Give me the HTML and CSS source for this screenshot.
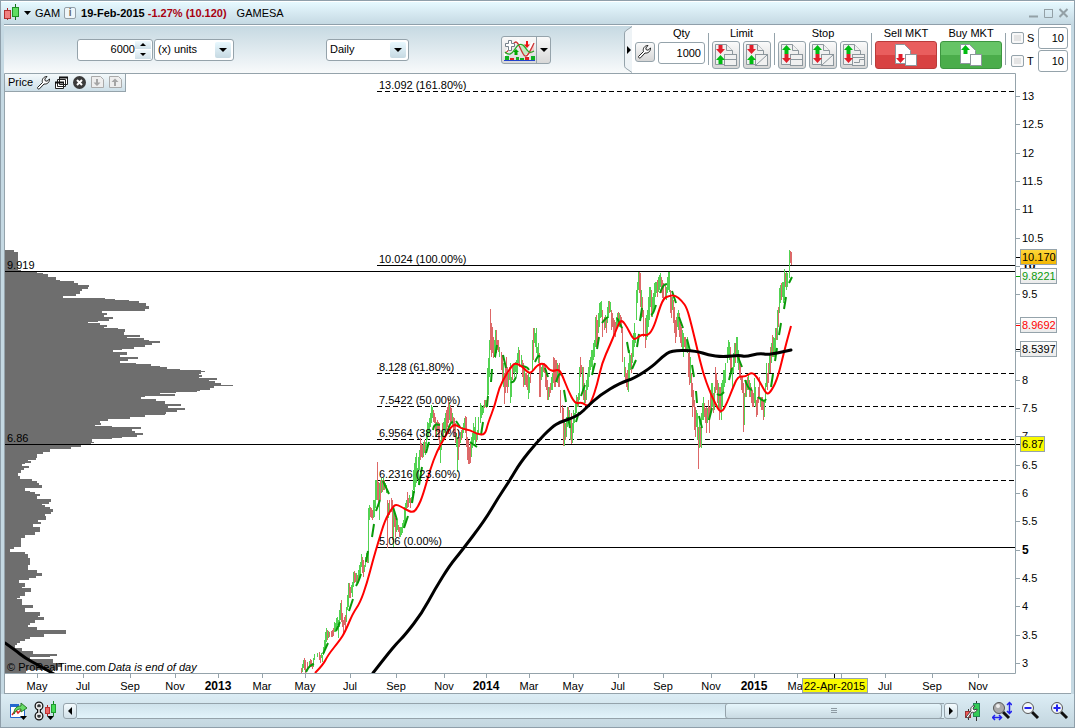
FILE: index.html
```html
<!DOCTYPE html>
<html lang="en">
<head>
<meta charset="utf-8">
<title>GAM - GAMESA</title>
<link rel="stylesheet" href="styles.css">
</head>
<body>
<svg class="defs" aria-hidden="true">
  <defs>
    <path id="up" d="M4.500 0L9 5H6.500V9H2.500V5H0Z"/>
    <path id="down" d="M4.500 9L9 4H6.500V0H2.500V4H0Z"/>
    <path id="sheet" d="M1.500.5H12.500L18.500 6.500V20.500H1.500Z"/>
    <path id="wrench" d="M1.500 12.500L6.500 7.500C5.500 4.500 7.500 1.500 11 1.500L8.800 4L9.200 5.800L11 6.200L13.500 4C13.700 7.500 11 9.500 8 9L3.500 13.800C2.500 14.500 1 13.500 1.500 12.500Z"/>
  </defs>
</svg>
<div class="window">
  <header class="titlebar">
    <svg class="logo" width="16" height="18" viewBox="0 0 16 18"><path d="M3.500 4V16" stroke="#b02020"/><rect x=".5" y="6.500" width="6" height="8" fill="#f08080" stroke="#b03030"/><path d="M11.500 0V16" stroke="#107018"/><rect x="8.500" y="3.500" width="6" height="9" fill="#5fdd62" stroke="#209028"/></svg>
    <svg class="caret" width="7" height="4" viewBox="0 0 7 4"><path d="M0 0H7L3.500 4Z"/></svg>
    <span>GAM</span>
    <button class="info" aria-label="Information">i</button>
    <strong class="quote">19-Feb-2015 <span class="loss">-1.27% (10.120)</span></strong>
    <span class="name">GAMESA</span>
    <div class="wincontrols">
      <button aria-label="Minimise"><svg width="9" height="10" viewBox="0 0 9 10"><path d="M0 8.500H9" stroke="#93a0a6" stroke-width="2"/></svg></button>
      <button aria-label="Maximise"><svg width="9" height="10" viewBox="0 0 9 10"><path d="M.5 1V9.500H8.500V1M0 1.500H9" fill="none" stroke="#93a0a6"/></svg></button>
      <button aria-label="Close"><svg width="9" height="10" viewBox="0 0 9 10"><path d="M.5 1L8.500 9M8.500 1L.5 9" stroke="#93a0a6" stroke-width="2"/></svg></button>
    </div>
  </header>

  <main class="content">
    <div class="toolbar">
      <div class="settings">
        <div class="pair">
          <div class="field units">
            <input type="text" value="6000" aria-label="Number of units">
            <div class="spin">
              <button aria-label="Increase"><svg width="6" height="3" viewBox="0 0 6 3"><path d="M0 3H6L3 0Z"/></svg></button>
              <button aria-label="Decrease"><svg width="6" height="3" viewBox="0 0 6 3"><path d="M0 0H6L3 3Z"/></svg></button>
            </div>
          </div>
          <div class="field kind">
            <select aria-label="Unit type"><option>(x) units</option></select>
            <span class="chip"><svg width="8" height="4" viewBox="0 0 8 4"><path d="M0 0H8L4 4Z"/></svg></span>
          </div>
        </div>
        <div class="field period">
          <select aria-label="Period"><option>Daily</option></select>
          <span class="chip"><svg width="8" height="4" viewBox="0 0 8 4"><path d="M0 0H8L4 4Z"/></svg></span>
        </div>
        <button class="indicator" aria-label="Add indicator">
          <svg width="32" height="22" viewBox="0 0 32 22">
            <path d="M0 17L8 5L14 2L20 13L24 16L29 3" fill="none" stroke="#fff" stroke-width="3"/>
            <path d="M15 7L20 5L24 14L20 17Z" fill="#bfeabf"/><path d="M23 14L30 5V12L27 15H24Z" fill="#f6caca"/>
            <path d="M1 14C5 13 9 3 12 3S18 16 21 17S26 12 30 4" fill="none" stroke="#c33" stroke-width="1.300"/>
            <path d="M1 13C5 17 8 15 11 10S17 4 20 7S24 16 30 12" fill="none" stroke="#2a2" stroke-width="1.300"/>
            <path d="M4.500 1.500H7.500V4.500H10.500V7.500H7.500V11.500H4.500V7.500H1.500V4.500H4.500Z" fill="#fff" stroke="#75818b"/>
            <path d="M12 10L15 13H13.500V16H10.500V13H9Z" fill="#0a0"/><path d="M23 9L26 5.500H24V2H22V5.500H20Z" fill="#e11"/>
            <path d="M1 17H5V21H1ZM12 18H15V21H12ZM16 19H20V21H16ZM27 17H31V21H27Z" fill="#10b020"/><path d="M6 19H10V21H6ZM21 18H25V21H21Z" fill="#d22"/><path d="M0 21.500H31" stroke="#24c"/>
          </svg>
          <span class="drop"><svg width="8" height="4" viewBox="0 0 8 4"><path d="M0 0H8L4 4Z"/></svg></span>
        </button>
      </div>

      <div class="orders">
        <svg class="handle" width="8" height="47" viewBox="0 0 8 47"><path class="slope" d="M8 .5L1.500 5Q.5 5.700.5 8V39Q.5 41.300 1.500 42L8 46.500Z"/><path class="edge" d="M8 .5L1.500 5Q.5 5.700.5 8V39Q.5 41.300 1.500 42L8 46.500"/><path d="M3 20L7 24L3 28Z"/></svg>
        <button class="tool small" aria-label="Order settings"><svg width="16" height="16" viewBox="0 0 16 16"><use href="#wrench" fill="#fff" stroke="#222"/></svg></button>
        <div class="group qty">
          <label for="qty">Qty</label>
          <input id="qty" type="text" value="1000">
        </div>
        <i class="sep"></i>
        <div class="group"><span>Limit</span>
          <div class="row">
            <button class="tool" aria-label="Limit"><svg width="24" height="22" viewBox="0 0 24 22"><use class="page" href="#sheet"/><path class="page" d="M12.500.5V6.500H18.500"/><rect class="page" x="10.500" y="10.500" width="12" height="11"/><path class="page" d="M10 15.500H23"/><use href="#down" x="2" y="1" fill="#e11d2a"/><use href="#up" x="2" y="11" fill="#0b1"/></svg></button>
            <button class="tool" aria-label="Sloped limit"><svg width="24" height="22" viewBox="0 0 24 22"><use class="page" href="#sheet"/><path class="page" d="M12.500.5V6.500H18.500"/><rect class="page" x="10.500" y="10.500" width="12" height="11"/><path class="page" d="M11 21L22 11"/><use href="#down" x="2" y="1" fill="#e11d2a"/><use href="#up" x="2" y="11" fill="#0b1"/></svg></button>
          </div>
        </div>
        <i class="sep"></i>
        <div class="group"><span>Stop</span>
          <div class="row">
            <button class="tool" aria-label="Stop"><svg width="24" height="22" viewBox="0 0 24 22"><use class="page" href="#sheet"/><path class="page" d="M12.500.5V6.500H18.500"/><rect class="page" x="10.500" y="10.500" width="12" height="11"/><path class="page" d="M10 15.500H23"/><use href="#up" x="2" y="1" fill="#0b1"/><use href="#down" x="2" y="10" fill="#e11d2a"/></svg></button>
            <button class="tool" aria-label="Sloped stop"><svg width="24" height="22" viewBox="0 0 24 22"><use class="page" href="#sheet"/><path class="page" d="M12.500.5V6.500H18.500"/><rect class="page" x="10.500" y="10.500" width="12" height="11"/><path class="page" d="M11 21L22 11"/><use href="#up" x="2" y="1" fill="#0b1"/><use href="#down" x="2" y="10" fill="#e11d2a"/></svg></button>
            <button class="tool" aria-label="Trailing stop"><svg width="24" height="22" viewBox="0 0 24 22"><use class="page" href="#sheet"/><path class="page" d="M12.500.5V6.500H18.500"/><rect class="page" x="10.500" y="10.500" width="12" height="11"/><path class="page" d="M10 13.500H23M12 18.500H17.500V15.500H22"/><use href="#up" x="2" y="1" fill="#0b1"/><use href="#down" x="2" y="10" fill="#e11d2a"/></svg></button>
          </div>
        </div>
        <i class="sep"></i>
        <div class="group"><label for="sell">Sell MKT</label>
          <button id="sell" class="market sell" aria-label="Sell MKT"><svg width="22" height="22" viewBox="0 0 22 22"><path class="page" d="M.5.500H9.500L15.500 6.500V19.500H.5Z"/><rect class="page" x="10.500" y="10.500" width="11" height="11"/><use href="#down" x="1" y="10" fill="#e11d2a"/></svg></button>
        </div>
        <div class="group"><label for="buy">Buy MKT</label>
          <button id="buy" class="market buy" aria-label="Buy MKT"><svg width="22" height="22" viewBox="0 0 22 22"><path class="page" d="M.5.500H9.500L15.500 6.500V19.500H.5Z"/><rect class="page" x="10.500" y="10.500" width="11" height="11"/><use href="#up" x="1" y="1" fill="#0b1"/></svg></button>
        </div>
        <i class="sep"></i>
        <div class="protect">
          <div class="line"><input type="checkbox" id="s"><label for="s">S</label><input type="text" value="10" aria-label="S distance"></div>
          <div class="line"><input type="checkbox" id="t"><label for="t">T</label><input type="text" value="10" aria-label="T distance"></div>
        </div>
      </div>
    </div>

    <section class="chart">
      <svg class="plot" viewBox="4 73 1067 621" preserveAspectRatio="xMinYMin meet" role="img" aria-label="GAMESA daily price">
        <defs>
          <clipPath id="area"><rect x="5" y="74" width="1010" height="599"/></clipPath>
          <linearGradient id="gold" x2="0" y2="1"><stop offset="0" stop-color="#ffd83c"/><stop offset="1" stop-color="#f3b600"/></linearGradient>
          <linearGradient id="silver" x2="0" y2="1"><stop offset="0" stop-color="#fff"/><stop offset="1" stop-color="#eaeaea"/></linearGradient>
        </defs>
        <path class="frame" d="M4.500 694V73.500H1015.500V673.500H4M4 693.500H1071"/>
        <path id="profile" fill="#6e6e6e"/>
        <g class="level">
          <path class="dashed" d="M377 91.500H1015M377 373.500H1015M377 406.500H1015M377 439.500H1015M377 480.500H1015"/>
          <path d="M377 265.500H1015M377 547.500H1015M5 271.500H1015M5 444.500H1015"/>
        </g>
        <g clip-path="url(#area)">
          <path id="rises" class="bars" stroke="#52d352"/>
          <path id="falls" class="bars" stroke="#dd6868"/>
          <path id="fast" class="fast"/>
          <path id="medium" class="medium"/>
          <path id="slow" class="slow"/>
        </g>
        <g class="label">
          <text x="379" y="89">13.092 (161.80%)</text><text x="379" y="263">10.024 (100.00%)</text>
          <text x="379" y="371">8.128 (61.80%)</text><text x="379" y="404">7.5422 (50.00%)</text>
          <text x="379" y="437">6.9564 (38.20%)</text><text x="379" y="478">6.2316 (23.60%)</text>
          <text x="379" y="545">5.06 (0.00%)</text><text x="7" y="269">9.919</text><text x="7" y="442">6.86</text>
          <text x="7" y="671">© ProRealTime.com</text><text x="108" y="671" font-style="italic">Data is end of day</text>
        </g>
        <path id="ticks" class="frame"/>
        <g id="scale" class="label"></g>
        <g class="label">
          <path class="level" d="M1016 257.500H1020M1016 349.500H1020M1016 444.500H1020M834.500 674V678"/>
          <path d="M1016 276.500H1020" stroke="#0a0"/><path d="M1016 325.500H1020" stroke="red"/>
          <rect class="tag" x="1020.500" y="249.500" width="36" height="15" fill="url(#gold)"/><text x="1022" y="261">10.170</text>
          <rect class="tag" x="1020.500" y="268.500" width="36" height="15" fill="url(#silver)"/><text x="1022" y="280" fill="#0c9a0c">9.8221</text>
          <rect class="tag" x="1020.500" y="317.500" width="36" height="15" fill="url(#silver)"/><text x="1022" y="329" fill="red">8.9692</text>
          <rect class="tag" x="1020.500" y="341.500" width="36" height="15" fill="url(#silver)"/><text x="1022" y="353">8.5397</text>
          <rect class="tag" x="1020.500" y="436.500" width="24" height="15" fill="#fafa00"/><text x="1022" y="448">6.87</text>
          <rect class="tag" x="802.500" y="678.500" width="65" height="14" fill="#fafa00"/><text x="804" y="690">22-Apr-2015</text>
        </g>
      </svg>
      <div class="pricebar">
        <span>Price</span>
        <button aria-label="Price settings"><svg width="15" height="15" viewBox="0 0 15 15"><use href="#wrench" fill="#fff" stroke="#222"/></svg></button>
        <button aria-label="Detach"><svg width="15" height="15" viewBox="0 0 15 15"><path d="M5.500 2.500H13.500V9.500H5.500ZM3.500 4.500H11.500V11.500H3.500ZM1.500 7.500H9.500V13.500H1.500Z" fill="#fff" stroke="#222"/><path d="M5 2.500H14M1 7.500H10" stroke="#111" stroke-width="2"/></svg></button>
        <button aria-label="Remove"><svg width="15" height="15" viewBox="0 0 15 15"><circle cx="7.500" cy="7.500" r="6.500" fill="#3b3b3b"/><path d="M5 5L10 10M10 5L5 10" stroke="#fff" stroke-width="2"/></svg></button>
        <button aria-label="Move down" disabled><svg width="15" height="15" viewBox="0 0 15 15"><path d="M1.500 1.500H10.500L13.500 4.500V12.500H1.500Z" fill="#eee" stroke="#aaa"/><path d="M7 11L3.500 7.500H6V4H8V7.500H10.500Z" fill="#a5a5a5"/></svg></button>
        <button aria-label="Move up" disabled><svg width="15" height="15" viewBox="0 0 15 15"><path d="M1.500 1.500H10.500L13.500 4.500V12.500H1.500Z" fill="#eee" stroke="#aaa"/><path d="M7 3.500L3.500 7H6V11H8V7H10.500Z" fill="#a5a5a5"/></svg></button>
      </div>
    </section>
  </main>

  <footer class="bottombar">
    <button aria-label="Export chart"><svg width="20" height="20" viewBox="0 0 20 20"><path d="M1.500 4V16.500H15.500V8" fill="#fff" stroke="#2468d0"/><path d="M1 4.500H10" stroke="#2468d0" stroke-width="3"/><path d="M3 14L7 9L9 12L13 8" fill="none" stroke="#d22" stroke-width="1.500"/><path d="M5 13C5 7 8 5 12 5V2L18 7L12 11V8C9 8 7 9 5 13Z" fill="#66dc66" stroke="#2a7a2a"/><path d="M11 15H18L14.500 19Z"/></svg></button>
    <button aria-label="Link charts"><svg width="24" height="20" viewBox="0 0 24 20"><g fill="none" stroke="#111" stroke-width="4"><circle cx="5" cy="5" r="2.500"/><circle cx="5" cy="15" r="2.500"/><path d="M5 6V14"/></g><g fill="none" stroke="#eee" stroke-width="1.500"><circle cx="5" cy="5" r="2.500"/><circle cx="5" cy="15" r="2.500"/><path d="M5 6V14"/></g><path d="M13.500 4V15" stroke="#a22"/><rect x="11.500" y="6.500" width="4" height="6" fill="#e66" stroke="#b33"/><path d="M19.500 0V15" stroke="#182"/><rect x="17.500" y="3.500" width="4" height="8" fill="#4d5" stroke="#293"/><path d="M13 15H20L16.500 19Z"/></svg></button>
    <button class="arrow" aria-label="Scroll left"><svg width="4" height="8" viewBox="0 0 4 8"><path d="M4 0V8L0 4Z"/></svg></button>
    <div class="track"><div class="thumb"><svg width="6" height="5" viewBox="0 0 6 5"><path d="M0 .5H6M0 2.500H6M0 4.500H6" stroke="#8e9ba3"/></svg></div></div>
    <button class="arrow" aria-label="Scroll right"><svg width="4" height="8" viewBox="0 0 4 8"><path d="M0 0V8L4 4Z"/></svg></button>
    <div class="views">
      <button aria-label="Chart style"><svg width="18" height="20" viewBox="0 0 18 20"><path d="M11.500 0V20M3.500 8V19" stroke="#333"/><rect x="8.500" y="2.500" width="6" height="13" fill="#3c5" stroke="#285"/><rect x=".5" y="10.500" width="5" height="6" fill="#e55" stroke="#933"/><path d="M1 16L6 10C5 7 7 4 10 5L8 7L9 9L12 8C12 11 9 12 7 11L3 17Z" fill="#fff" stroke="#444"/></svg></button>
      <button aria-label="Automatic zoom"><svg width="20" height="20" viewBox="0 0 20 20"><path d="M11 11L17 17" stroke="#111" stroke-width="3"/><circle cx="7" cy="7" r="5.500" fill="#aaa" stroke="#555"/><circle cx="6" cy="5" r="2" fill="#eee"/><path d="M17.500 2V11M15 4L17.500 1.500L20 4M15 10L17.500 12.500L20 10M1 16.500H9M3 14L.5 16.500L3 19M7 14L9.500 16.500L7 19" fill="none" stroke="#22e" stroke-width="1.500"/></svg></button>
      <button aria-label="Zoom out"><svg width="20" height="20" viewBox="0 0 20 20"><path d="M11 11L17 17" stroke="#111" stroke-width="3"/><circle cx="7" cy="7" r="5.500" fill="#f3f8fb" stroke="#555"/><path d="M3.500 7H10.500" stroke="#22e" stroke-width="2"/></svg></button>
      <button aria-label="Zoom in"><svg width="20" height="20" viewBox="0 0 20 20"><path d="M11 11L17 17" stroke="#111" stroke-width="3"/><circle cx="7" cy="7" r="5.500" fill="#f3f8fb" stroke="#555"/><path d="M3.500 7H10.500M7 3.500V10.500" stroke="#22e" stroke-width="2"/></svg></button>
    </div>
  </footer>
</div>
<script src="chart.js"></script>
</body>
</html>
```
FILE: styles.css
```css
* { box-sizing: border-box; }
body { margin: 0; font: 11px/13px "Liberation Sans", Arial, sans-serif; color: #000; }
button, input, select { font: inherit; color: inherit; margin: 0; padding: 0; }
button { border: 0; background: none; display: flex; align-items: center; justify-content: center; }
svg { display: block; flex: none; }
.defs { position: absolute; width: 0; height: 0; }

.window { min-height: 100vh; display: flex; flex-direction: column; border: 1px solid #8f9faa; background: #c5d9e3; }
.titlebar { height: 23px; flex: none; display: flex; align-items: center; padding: 0 6px 0 3px; border-top: 1px solid #fff; background: linear-gradient(#e6f9ff, #c5d9e3); }
.caret { margin: 0 4px; }
.info { width: 12px; height: 12px; margin: 0 5px 0 4px; border: 1px solid #93a0a8; border-radius: 2px; background: #eef6fa; color: #666; font-weight: bold; font-size: 10px; line-height: 10px; }
.quote { white-space: pre; }
.loss { color: #a80010; }
.name { margin-left: 10px; }
.wincontrols { margin-left: auto; display: flex; gap: 6px; }

.content { flex: 1; display: flex; flex-direction: column; margin: 0 3px; border-top: 1px solid #8f9faa; background: #fff; }
.toolbar { height: 48px; flex: none; display: flex; border-top: 1px solid #fff; background: linear-gradient(#c6d9e2, #f8fafb); }
.settings { flex: 1; display: flex; align-items: center; gap: 92px; padding-left: 73px; }
.pair { display: flex; gap: 1px; }
.field { position: relative; height: 22px; display: flex; border: 1px solid #95a3ab; border-radius: 3px; background: #fff; }
.units { width: 76px; padding: 1px; }
.units input { flex: 1; min-width: 0; border: 0; background: none; text-align: right; }
.kind { width: 80px; }
.period { width: 83px; }
.field select { width: 100%; border: 0; padding-left: 3px; background: none; appearance: none; }
.spin { width: 16px; display: flex; flex-direction: column; gap: 1px; }
.spin button { flex: 1; background: linear-gradient(#f0f9fd, #cfdfe7); }
.chip { position: absolute; right: 2px; top: 2px; width: 16px; height: 16px; display: grid; place-items: center; border-radius: 2px; background: linear-gradient(#e8f8fe, #c6d9e2); pointer-events: none; }
.indicator { width: 50px; height: 28px; justify-content: space-between; padding-left: 2px; border: 1px solid #95a3ab; border-radius: 3px; background: linear-gradient(#fafafa, #d8d8d8); }
.drop { width: 14px; height: 26px; display: grid; place-items: center; border-left: 1px solid #95a3ab; }

.orders { display: flex; gap: 3px; background: linear-gradient(90deg, transparent 8px, #fff 8px); padding-right: 3px; }
.slope { fill: #eef3f6; }
.edge { fill: none; stroke: #95a3ab; }
.tool { width: 28px; height: 28px; border: 1px solid #95a3ab; border-radius: 3px; background: linear-gradient(#fafafa, #d6d6d6); }
.small { width: 20px; height: 20px; margin-top: 16px; }
.page { fill: #f0f0f0; stroke: #8d979d; }
.market .page { fill: #fff; }
.group { display: flex; flex-direction: column; text-align: center; }
.group > span, .group > label { height: 15px; padding-top: 1px; }
.row { display: flex; gap: 3px; }
.sep { width: 1px; height: 32px; margin-top: 7px; background: #95a3ab; }
.qty { width: 47px; }
.qty input, .line input[type=text] { height: 22px; padding-right: 3px; border: 1px solid #95a3ab; border-radius: 3px; background: #fff; text-align: right; }
.qty input { width: 100%; margin-top: 1px; }
.market { width: 62px; height: 28px; border-radius: 3px; }
.sell { border: 1px solid #b93b3b; background: linear-gradient(#e95e5e 50%, #d84242 50%); }
.buy { border: 1px solid #3d9540; background: linear-gradient(#66c466 50%, #4bad4b 50%); }
.protect { display: flex; flex-direction: column; gap: 1px; padding: 1px 0 0 2px; }
.line { display: flex; align-items: center; gap: 3px; }
.line label { width: 8px; }
.line input[type=text] { width: 30px; }
.line input[type=checkbox] { width: 13px; height: 12px; appearance: none; border: 1px solid #95a3ab; border-radius: 2px; background: #e4e4e4; box-shadow: inset 0 0 0 2px #f8f8f8; }

.chart { position: relative; flex: 1; }
.plot { width: 100%; height: auto; }
.frame { fill: none; stroke: #95a3ab; }
.level { fill: none; stroke: #000; }
.dashed { stroke-dasharray: 5 3; }
.bars { fill: none; shape-rendering: crispEdges; }
.fast { fill: none; stroke: #0a9a0a; stroke-width: 2; }
.medium { fill: none; stroke: #f00; stroke-width: 2; stroke-linejoin: round; }
.slow { fill: none; stroke: #000; stroke-width: 3; stroke-linejoin: round; stroke-linecap: round; }
.label { font-size: 11px; }
.tag { stroke: #95a3ab; }
.major { font-size: 12px; font-weight: bold; }
.middle { text-anchor: middle; }
.pricebar { position: absolute; left: 1px; top: 1px; height: 18px; display: flex; align-items: center; gap: 3px; padding: 0 2px 0 3px; border: solid #95a3ab; border-width: 0 1px 1px 0; background: linear-gradient(#f4f9fb, #cddfe8); }

.bottombar { height: 33px; flex: none; display: flex; align-items: center; padding: 0 4px 0 8px; background: linear-gradient(#dcedf5, #c3d6df); }
.bottombar > button + button { margin-left: 5px; }
.bottombar .arrow { width: 14px; height: 16px; border: 1px solid #95a3ab; border-radius: 3px; background: linear-gradient(#f4fbfe, #d0e0e8); }
.track { flex: 1; height: 16px; display: flex; justify-content: flex-end; border: solid #95a3ab; border-width: 1px 0; background: linear-gradient(#cfe2eb, #e2f4fb); }
.thumb { width: 25%; height: 16px; margin: -1px 2px 0 0; display: grid; place-items: center; border: 1px solid #95a3ab; border-radius: 3px; background: linear-gradient(#e6f6fc, #c9dae2); }
.views { display: flex; gap: 9px; margin-left: 7px; }
```
FILE: chart.js
```js
// Volume profile: "right edge,bottom" of each step, from the top down.
const profile = `14,252 18,270 21,271 37,273 43,274 48,277 56,280 60,281 74,283 78,285 89,287 88,289 82,291 80,294 76,296 63,298 105,299 115,300 129,301 139,303 146,306 149,309 145,311 102,313 107,315 104,317 113,319 109,321 98,322 88,323 100,325 107,327 104,328 118,329 125,332 124,335 140,337 127,338 144,340 149,341 160,343 152,345 145,347 134,349 122,350 113,352 127,355 120,357 138,359 128,361 120,363 136,364 151,366 160,367 167,369 180,370 201,371 205,372 201,374 199,375 202,377 199,378 217,380 209,381 215,383 221,385 233,386 214,388 210,390 200,391 197,392 176,393 160,394 175,396 145,397 141,399 156,401 165,404 181,406 168,408 185,410 177,412 166,414 165,415 145,417 130,419 108,421 100,423 101,425 95,426 112,427 141,429 132,431 135,433 143,435 137,437 122,438 112,439 92,442 94,443 91,445 81,447 71,449 50,452 43,454 37,458 36,460 28,461 31,463 25,464 22,466 29,468 24,470 21,473 18,476 20,479 32,481 37,483 39,485 42,488 25,491 30,492 35,494 40,496 37,499 51,502 49,504 42,505 45,507 50,509 53,512 51,514 45,516 46,520 38,522 41,524 33,527 40,532 35,535 25,538 21,547 14,549 10,552 25,554 28,558 30,565 28,570 37,573 42,576 36,578 29,580 19,583 25,587 22,588 31,592 25,596 20,598 17,599 22,605 33,608 25,612 40,616 38,617 44,620 35,623 30,625 28,627 37,630 66,634 44,637 30,639 25,641 20,643 17,645 15,648 22,651 33,654 57,656 50,657 30,659 53,663 62,667 58,670 26,673`;

// Daily ranges in thirds of a pixel, "x,high,low,direction", from each section's origin.
const sections = [
  [290, 440, `33,683,698,r 36,672,695,g 39,660,685,g 42,655,690,r 45,660,698,r 51,665,690,r 57,662,685,g 60,657,680,r 63,660,682,r 66,670,688,r 69,655,680,g 72,642,660,g 81,640,650,g 87,635,660,r 90,645,670,r 93,640,655,g 96,645,665,g 99,620,645,g 102,600,640,g 105,575,620,g 108,565,605,g 111,570,600,r 114,572,595,g 117,575,590,r 123,572,590,r 126,570,590,r 129,565,588,r 132,545,575,g 135,550,575,g 138,535,570,g 141,530,555,g 144,540,595,g 147,510,560,g 150,490,540,g 153,480,545,r 156,520,560,r 159,540,585,r 162,530,555,r 165,525,575,r 168,500,545,g 171,465,510,g 174,430,500,g 177,430,475,r 180,440,475,r 183,435,460,g 186,425,470,g 189,395,440,g 192,392,430,r 195,400,425,r 198,400,430,g 201,405,425,r 204,390,420,g 207,375,415,g 210,365,405,g 213,343,380,g 216,350,400,r 219,360,410,r 222,375,395,g 225,350,380,g 228,340,365,g 231,340,370,r 234,205,368,g 237,195,240,g 240,200,230,r 243,205,235,r 246,210,240,r 249,180,235,g 252,180,230,g 255,120,205,g 258,120,180,g 261,66,180,r 264,125,200,r 267,130,240,g 270,120,180,r 273,115,160,g 276,120,155,r 279,115,150,g 282,120,150,r 285,130,145,g 288,135,160,g 291,180,325,r 294,190,235,g 297,180,225,r 303,175,215,r 306,180,300,r 309,200,320,g 312,215,260,r 315,235,290,r 318,230,275,g 321,240,270,g 324,255,275,r 327,260,290,r 330,262,290,g 333,260,285,g 336,250,280,g 339,240,265,g 342,200,255,g 345,190,245,g 348,180,210,g 351,155,205,r 354,175,200,r 357,165,190,g 360,175,205,r 363,170,190,g 366,150,185,g 369,100,150,g 372,85,160,g 375,70,140,g 378,45,130,g 381,90,120,g 384,90,135,g`],
  [370, 290, `129,540,600,g 132,520,590,g 135,500,550,g 138,490,560,g 141,535,560,g 144,500,585,g 147,480,540,g 150,445,510,r 153,460,500,r 156,465,505,r 159,455,500,g 162,450,490,r 165,455,495,g 168,420,475,g 171,395,450,g 174,400,440,g 177,385,430,g 180,370,410,g 183,345,400,g 186,350,385,g 189,360,395,r 192,370,400,r 195,380,440,r 198,395,440,g 201,390,425,r 204,395,450,r 207,400,480,r 210,450,518,g 213,430,480,g 216,400,460,r 219,395,450,g 222,385,430,g 225,370,420,g 228,360,420,r 231,350,410,r 234,325,400,r 237,335,390,g 240,345,395,r 243,355,395,r 246,370,410,g 249,380,430,r 252,385,440,r 255,400,460,r 258,430,470,g 261,440,545,g 264,420,510,r 267,440,470,r 270,425,460,g 273,420,450,r 276,410,445,g 279,400,430,g 282,385,420,g 285,378,430,r 288,380,470,r 291,440,510,r 294,450,522,r 297,470,522,r 300,460,520,r 303,440,500,g 306,430,475,g 309,400,460,g 312,410,450,g 315,380,470,g 318,430,455,r 321,420,450,g 324,380,430,g 330,340,400,g 333,345,385,g 336,350,375,g 339,345,370,g 342,330,355,r 345,330,350,g 348,330,355,r 351,235,340,g 354,205,315,g 357,150,260,g 360,57,180,r 363,100,200,r 366,110,190,r 369,140,205,r 372,150,200,g 375,120,205,g 378,120,190,r 381,150,180,r 384,150,185,r 387,170,200,g 393,185,240,r 396,195,270,r 399,220,290,g 402,250,342,r 405,230,310,r 408,200,290,r 411,230,310,r 414,250,290,g 417,230,270,r 420,220,340,g 423,260,320,g 426,230,270,r 429,225,250,g 432,220,260,g 435,215,245,g 438,210,260,g 441,190,250,g 444,170,220,g 447,180,230,r 453,195,230,g 456,210,260,r 459,220,290,r 462,240,285,g 465,250,285,r 468,250,290,r 471,255,300,r 474,250,328,g 477,260,310,g 480,250,280,r 486,150,240,g 489,115,210,r 492,115,160,g 495,130,170,g 498,115,190,g 501,170,200,g 504,160,220,g 507,190,320,r 510,220,320,r 513,230,270,g 516,225,260,g 519,220,245,r 522,220,250,r 525,225,290,r 528,240,300,r 531,270,330,r 534,290,330,g 537,290,320,r 540,280,310,r 543,260,300,g 546,250,300,g 549,200,280,r 552,205,290,r 555,210,290,r 558,210,270,r 561,220,280,g 564,225,290,r 567,220,290,r 570,300,370,r 576,345,400,r 579,355,467,r 582,390,467,g 585,400,450,r 588,380,440,g 591,350,410,g 594,350,400,r 597,360,400,g 600,380,450,g 603,370,463,r 606,400,460,g 609,360,430,g 612,370,400,g 615,340,380,g 618,315,370,g 621,320,350,r 624,310,350,g 627,230,330,g 630,200,260,r 633,225,250,r 636,230,300,g 639,230,330,r 642,280,345,g 645,300,340,r 648,270,330,g 651,250,300,g 654,230,290,g 657,210,260,g 660,200,240,g 663,180,230,g 666,180,240,g 669,160,210,g 672,150,200,g 675,80,170,g`],
  [560, 240, `108,225,320,r 111,240,310,r 114,220,280,g 117,190,260,g 120,185,235,g 123,183,230,g 126,210,290,r 132,230,270,r 135,225,265,g 138,230,280,r 141,200,250,g 144,182,235,g 147,182,220,r 150,185,215,g 153,210,270,r 156,220,260,r 159,235,290,r 162,240,275,r 165,245,290,r 168,230,270,g 171,218,260,g 174,215,250,r 177,220,260,g 180,225,250,r 183,230,280,r 186,260,365,r 192,350,410,g 195,380,430,r 198,400,440,r 201,390,450,r 204,370,455,g 207,330,420,g 210,345,390,g 213,340,400,r 216,300,370,g 219,280,350,g 222,250,320,g 225,280,310,g 228,150,240,g 231,125,190,g 234,97,150,g 237,95,160,r 240,100,200,r 243,150,235,g 246,170,230,r 249,210,290,r 255,235,325,r 258,225,300,g 261,210,290,g 264,170,260,g 267,140,240,g 270,140,200,g 273,150,230,r 276,170,230,g 279,160,210,g 282,130,200,g 285,125,170,g 288,125,160,g 291,120,170,r 294,110,155,g 297,105,150,g 300,98,140,g 303,110,160,r 306,120,175,r 309,130,180,r 315,135,175,r 318,140,180,g 321,110,160,g 324,97,150,g 327,95,155,g 330,150,220,r 333,170,235,r 336,170,210,g 339,180,250,r 342,200,280,r 345,240,310,r 348,230,290,r 351,220,260,g 354,210,270,g 357,220,290,r 360,240,310,r 363,260,320,r 366,270,330,g 369,280,350,g 372,290,320,r 375,290,330,r 378,300,330,g 381,290,340,g 384,340,410,r 387,320,435,r 390,350,430,g 393,400,470,r 396,430,530,r 399,450,500,r 402,480,570,r 405,500,590,r 408,510,560,g 411,520,600,g 414,560,687,r 417,540,625,g 420,560,620,r 423,520,625,g 426,490,540,g 429,470,540,g 432,490,530,r 435,505,550,r 438,500,580,r 441,505,550,g 444,480,540,r 447,500,580,r 450,450,520,r 453,430,510,g 456,430,500,g 459,460,520,r 462,440,510,g 465,380,460,r 468,400,450,r 471,420,490,r 474,430,510,g 477,440,540,r 480,440,520,r 483,430,540,g 486,420,500,g 489,390,460,g 492,390,440,g 495,370,430,g 501,320,370,g 504,300,350,g 507,305,360,g 510,320,400,r 513,350,390,r 516,380,450,g 519,340,400,g 522,310,380,g 525,310,370,r 528,290,350,g 531,290,370,g 534,330,390,g 537,345,410,r 540,370,420,r 543,410,450,r 546,410,460,r 549,430,575,r 552,460,555,g 555,430,470,r 558,420,470,g 561,410,450,r 564,400,450,g 567,420,470,r 570,430,470,g 573,440,490,r 576,450,500,r 579,460,500,r 582,415,490,g 585,440,500,g 588,480,530,r 591,470,525,r 594,440,490,r 597,410,470,r 600,470,500,g 603,470,510,r 606,470,510,r 609,480,540,r 612,480,530,g 615,430,490,g 618,370,440,g 621,400,450,r 624,370,430,r 627,345,400,g 630,320,400,r 633,310,370,g 636,285,350,r 639,290,350,g 642,295,350,g 645,265,340,g 648,265,300,r 651,210,300,g 654,200,260,r 657,145,220,g 660,135,190,g 663,130,180,r 666,125,170,g 669,125,190,g 672,87,180,g 675,100,140,r 678,95,150,g 681,100,140,g 687,30,115,g 690,32,70,r 693,35,75,r`],
];

// Moving averages: points "x y", with "/" between separate strokes.
const averages = {
  fast: '306 672 309 666 314 664/323 654 328 643/336 631 340 622/349 611 353 599/356 586 358 583 361 574/366 562 368 551/372 537 374 524/376 511 380 500/383 481 389 494/393 507 397 520/404 528 408 516/412 503 414 491/419 485 422 467/426 453 429 442/433 430 434 424 440 425/447 433 450 423 453 422/456 421 460 427/470 442 477 447/481 435 483 422/487 407 488 396/491 382 492 369/495 357 497 345/503 355 506 368/511 382 513 383 516 377/522 366 527 367 529 370/535 362 538 355 540 357/545 368 548 377/556 382 559 373 561 375/564 390 566 402/568 417 570 428/576 422 579 412/581 396 585 385/592 375 595 363/597 349 599 337/602 323 605 319 608 317/617 318 622 328/627 342 629 353/632 369 636 360/637 347 639 334/640 321 642 308/651 315 653 314 656 305/660 293 663 285 667 284/672 291 676 303/679 317 683 328/687 339 690 351/692 365 694 377/696 391 697 403/699 416 702 428/709 420 712 408/717 394 720 396 724 392/729 380 732 368/738 357 742 367/745 380 748 388 752 390/758 397 764 402 766 399/771 387 773 374/775 361 777 348/779 335 781 323/784 309 786 297/789 283 792 277',
  medium: '315 673 323 665 328 655 340 640 345 632 353 613 360 603 367 583 373 560 378 543 385 520 392 508 396 504 405 509 413 513 418 507 423 495 430 470 437 451 445 437 450 428 455 424 462 429 470 430 477 434 485 435 488 423 495 405 499 388 507 373 512 366 515 363 522 366 530 375 537 365 544 363 551 372 559 369 563 377 568 390 575 404 582 402 588 407 592 400 597 385 602 363 610 345 615 333 619 323 622 320 627 327 633 339 636 339 642 334 648 336 654 327 660 307 664 298 669 296 675 295 682 301 687 308 692 327 697 348 703 373 710 392 715 403 721 414 727 403 732 390 738 376 745 377 752 372 757 377 762 386 767 395 772 390 778 377 785 348 791 326',
  slow: '373 673 387 655 397 643 405 635 422 613 435 589 450 565 460 553 485 520 498 498 510 480 520 463 537 442 552 427 560 422 570 419 580 414 587 407 600 395 620 383 635 378 653 366 662 357 672 350 697 351 708 355 723 357 740 355 745 357 760 353 768 355 791 350/5 643 15 650 25 658 38 665 54 674',
};

const byId = id => document.getElementById(id);

// Rounds a polyline by curving through the middle of each of its sides.
function curve(stroke) {
  const n = stroke.split(' ').map(Number);
  let d = `M${n[0]} ${n[1]}`;
  for (let i = 2; i < n.length - 2; i += 2) {
    d += `Q${n[i]} ${n[i + 1]} ${(n[i] + n[i + 2]) / 2} ${(n[i + 1] + n[i + 3]) / 2}`;
  }
  return d + `L${n[n.length - 2]} ${n[n.length - 1]}`;
}
for (const [id, strokes] of Object.entries(averages)) {
  byId(id).setAttribute('d', strokes.split('/').map(curve).join(''));
}

byId('profile').setAttribute('d', 'M5 250' + profile.split(' ').map(step => {
  const [x, y] = step.split(',');
  return `H${x}V${y}`;
}).join('') + 'H5Z');

const paths = { g: '', r: '' };
for (const [left, top, bars] of sections) {
  for (const bar of bars.split(' ')) {
    const [x, high, low, direction] = bar.split(',');
    paths[direction] += `M${left + Math.round(x / 3) + 0.5} ${top + Math.round(high / 3)}V${top + Math.round(low / 3)}`;
  }
}
byId('rises').setAttribute('d', paths.g);
byId('falls').setAttribute('d', paths.r);

let ticks = '';
let labels = '';
for (let price = 3; price <= 13; price += 0.5) {
  const y = Math.round(663 - (price - 3) * 56.7);
  ticks += `M1016 ${y + 0.5}H1020`;
  if (price !== 9 && price !== 8.5) {
    labels += `<text x="1022" y="${y + 4}"${price % 5 ? '' : ' class="major"'}>${price}</text>`;
  }
}
const dates = [[37, 'May'], [83, 'Jul'], [130, 'Sep'], [175, 'Nov'], [218, '2013'], [262, 'Mar'], [305, 'May'], [350, 'Jul'], [396, 'Sep'], [444, 'Nov'], [486, '2014'], [529, 'Mar'], [573, 'May'], [618, 'Jul'], [663, 'Sep'], [711, 'Nov'], [754, '2015'], [797, 'Mar'], [841, ''], [885, 'Jul'], [932, 'Sep'], [978, 'Nov']];
for (const [x, name] of dates) {
  ticks += `M${x + 0.5} 674V678`;
  labels += `<text x="${x}" y="690" class="middle${name.startsWith('20') ? ' major' : ''}">${name}</text>`;
}
byId('ticks').setAttribute('d', ticks);
byId('scale').innerHTML = labels;
```
